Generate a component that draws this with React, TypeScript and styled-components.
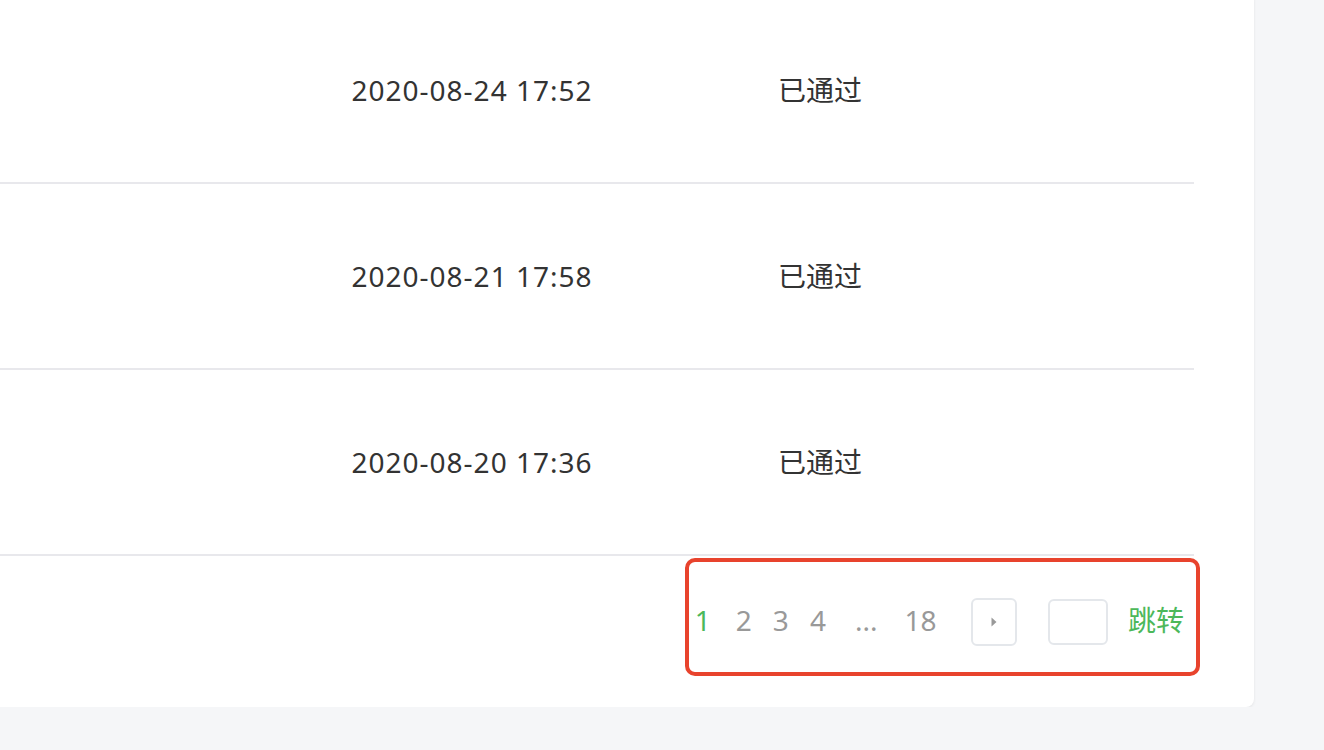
import React from "react";
import styled, { createGlobalStyle } from "styled-components";

const GlobalStyle = createGlobalStyle`
    html, body {
        margin: 0;
        padding: 0;
        background: #f5f6f8;
        overflow: hidden;
    }
    body {
        font-family: "Noto Sans", "Noto Sans CJK SC", sans-serif;
        color: #333;
    }
`;

const Card = styled.div`
    width: 1254px;
    margin-top: -2px;
    padding-right: 60px;
    box-sizing: border-box;
    background: #fff;
    border-radius: 0 0 8px 0;
    box-shadow: 0 1px 3px rgba(0, 0, 0, 0.08);
`;

const Row = styled.div`
    display: grid;
    grid-template-columns: 292px 360px 126px 1fr;
    align-items: center;
    height: 184px;
    border-bottom: 2px solid #e8e8ec;
    font-size: 28px;
    line-height: 40px;
`;

const DateCell = styled.div`
    grid-column: 2;
    text-align: center;
    letter-spacing: 1px;
`;

const StatusCell = styled.div`
    grid-column: 4;
`;

const Footer = styled.div`
    position: relative;
    height: 109px;
    padding-top: 42px;
    display: flex;
    align-items: flex-start;
    justify-content: flex-end;
    padding-right: 10px;
`;

const Pager = styled.div`
    display: flex;
    align-items: center;
    height: 48px;
    font-size: 28px;
`;

const PageLink = styled.span<{ $active?: boolean; $ml?: number }>`
    color: ${p => (p.$active ? "#4cb85a" : "#999")};
    padding: 0 10.5px;
    margin-left: ${p => p.$ml ?? 0}px;
    line-height: 44px;
    margin-bottom: 4px;
    cursor: pointer;
`;

const NextButton = styled.button`
    width: 46px;
    height: 48px;
    margin-left: 24px;
    border: 2px solid #e4e7eb;
    border-radius: 6px;
    background: #fff;
    display: flex;
    align-items: center;
    justify-content: center;
    padding: 0;
`;

const JumpInput = styled.input`
    width: 60px;
    height: 46px;
    margin-left: 31px;
    box-sizing: border-box;
    border: 2px solid #e4e7eb;
    border-radius: 6px;
    outline: none;
`;

const JumpLink = styled.span`
    margin-left: 20px;
    color: #4cb85a;
    font-size: 28px;
    line-height: 44px;
    margin-bottom: 4px;
`;

const Highlight = styled.div`
    position: absolute;
    left: 685px;
    top: 2px;
    width: 515px;
    height: 118px;
    box-sizing: border-box;
    border: 4px solid #e8432d;
    border-radius: 10px;
    pointer-events: none;
`;

const rows = [
    { date: "2020-08-24 17:52", status: "已通过" },
    { date: "2020-08-21 17:58", status: "已通过" },
    { date: "2020-08-20 17:36", status: "已通过" },
];

export default function App() {
    return (
        <>
            <GlobalStyle />
            <Card>
                {rows.map(r => (
                    <Row key={r.date}>
                        <DateCell>{r.date}</DateCell>
                        <StatusCell>{r.status}</StatusCell>
                    </Row>
                ))}
                <Footer>
                    <Pager>
                        <PageLink $active>1</PageLink>
                        <PageLink $ml={4}>2</PageLink>
                        <PageLink>3</PageLink>
                        <PageLink>4</PageLink>
                        <PageLink $ml={8}>...</PageLink>
                        <PageLink $ml={6}>18</PageLink>
                        <NextButton>
                            <svg width="6" height="10" viewBox="0 0 6 10">
                                <path d="M0.5 0.5 L5.5 5 L0.5 9.5 Z" fill="#999" />
                            </svg>
                        </NextButton>
                        <JumpInput />
                        <JumpLink>跳转</JumpLink>
                    </Pager>
                    <Highlight />
                </Footer>
            </Card>
        </>
    );
}
